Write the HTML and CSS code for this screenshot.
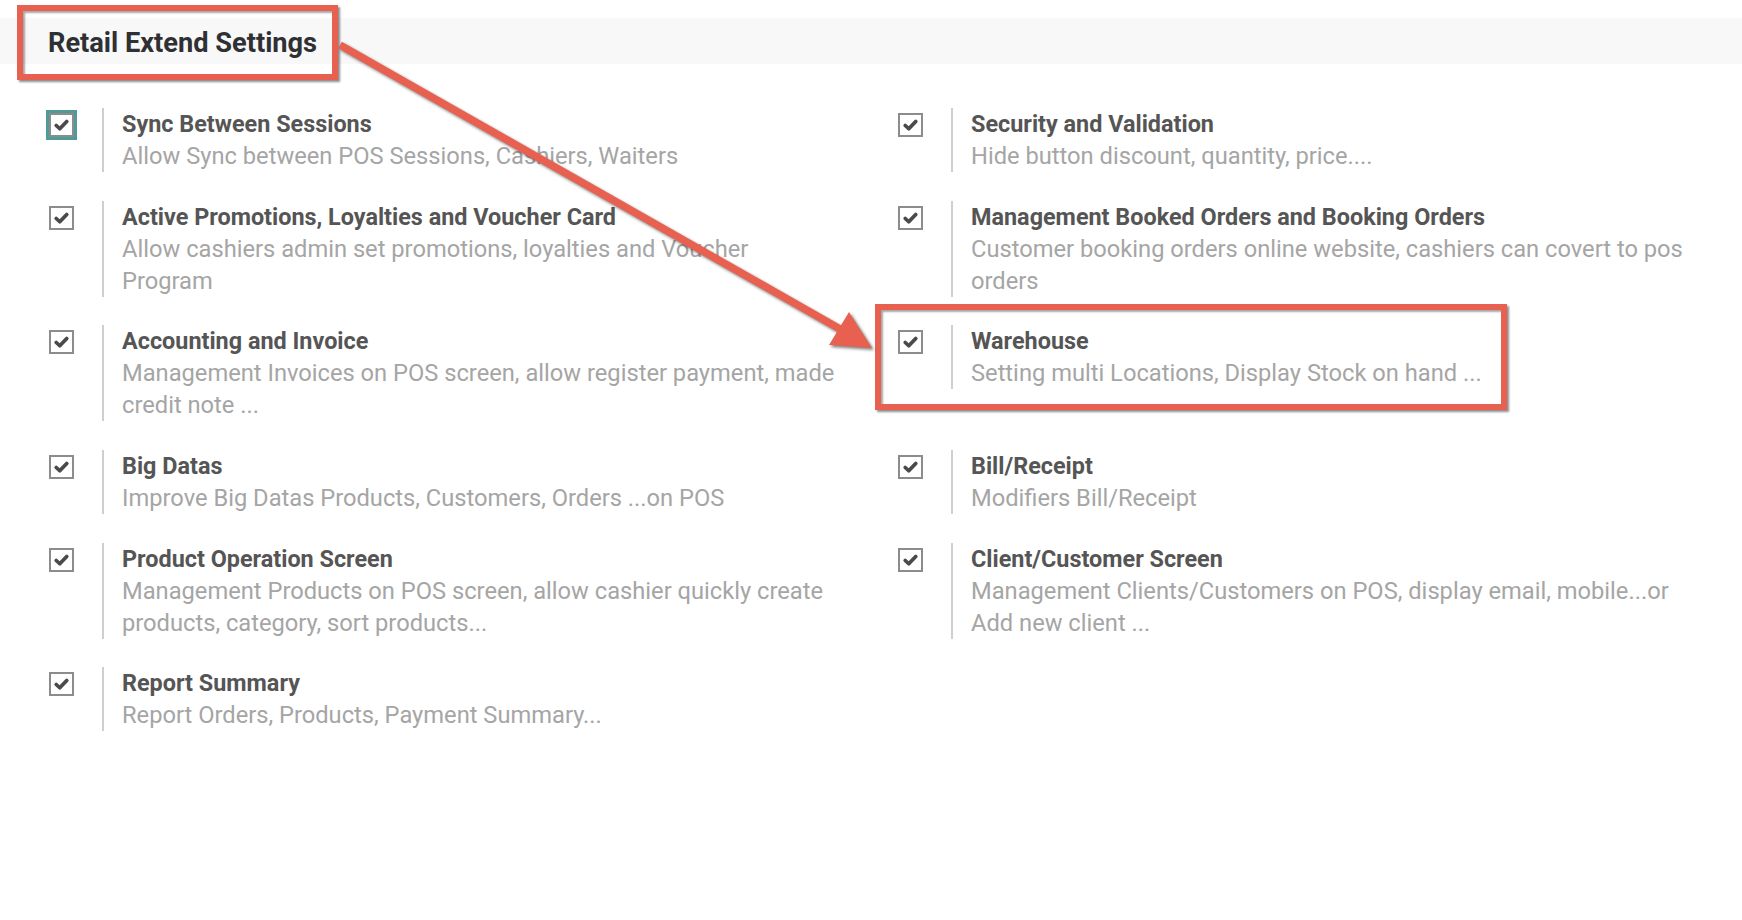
FILE: index.html
```html
<!DOCTYPE html>
<html>
<head>
<meta charset="utf-8">
<link rel="stylesheet" href="styles.css">
</head>
<body>
<div class="page">
  <div class="band"><h1 class="band-title">Retail Extend Settings</h1></div>
  <div class="grid">
    <div class="item">
      <div class="cb-cell"><span class="cb focus"><svg viewBox="0 0 16 16"><path d="M3.8 8.4 L6.6 11 L12.2 5.2" /></svg></span></div>
      <div class="txt"><div class="t">Sync Between Sessions</div><div class="d">Allow Sync between POS Sessions, Cashiers, Waiters</div></div>
    </div>
    <div class="item">
      <div class="cb-cell"><span class="cb"><svg viewBox="0 0 16 16"><path d="M3.8 8.4 L6.6 11 L12.2 5.2" /></svg></span></div>
      <div class="txt"><div class="t">Security and Validation</div><div class="d">Hide button discount, quantity, price....</div></div>
    </div>
    <div class="item">
      <div class="cb-cell"><span class="cb"><svg viewBox="0 0 16 16"><path d="M3.8 8.4 L6.6 11 L12.2 5.2" /></svg></span></div>
      <div class="txt"><div class="t">Active Promotions, Loyalties and Voucher Card</div><div class="d">Allow cashiers admin set promotions, loyalties and Voucher Program</div></div>
    </div>
    <div class="item">
      <div class="cb-cell"><span class="cb"><svg viewBox="0 0 16 16"><path d="M3.8 8.4 L6.6 11 L12.2 5.2" /></svg></span></div>
      <div class="txt"><div class="t">Management Booked Orders and Booking Orders</div><div class="d">Customer booking orders online website, cashiers can covert to pos orders</div></div>
    </div>
    <div class="item">
      <div class="cb-cell"><span class="cb"><svg viewBox="0 0 16 16"><path d="M3.8 8.4 L6.6 11 L12.2 5.2" /></svg></span></div>
      <div class="txt"><div class="t">Accounting and Invoice</div><div class="d">Management Invoices on POS screen, allow register payment, made credit note ...</div></div>
    </div>
    <div class="item">
      <div class="cb-cell"><span class="cb"><svg viewBox="0 0 16 16"><path d="M3.8 8.4 L6.6 11 L12.2 5.2" /></svg></span></div>
      <div class="txt"><div class="t">Warehouse</div><div class="d">Setting multi Locations, Display Stock on hand ...</div></div>
    </div>
    <div class="item">
      <div class="cb-cell"><span class="cb"><svg viewBox="0 0 16 16"><path d="M3.8 8.4 L6.6 11 L12.2 5.2" /></svg></span></div>
      <div class="txt"><div class="t">Big Datas</div><div class="d">Improve Big Datas Products, Customers, Orders ...on POS</div></div>
    </div>
    <div class="item">
      <div class="cb-cell"><span class="cb"><svg viewBox="0 0 16 16"><path d="M3.8 8.4 L6.6 11 L12.2 5.2" /></svg></span></div>
      <div class="txt"><div class="t">Bill/Receipt</div><div class="d">Modifiers Bill/Receipt</div></div>
    </div>
    <div class="item">
      <div class="cb-cell"><span class="cb"><svg viewBox="0 0 16 16"><path d="M3.8 8.4 L6.6 11 L12.2 5.2" /></svg></span></div>
      <div class="txt"><div class="t">Product Operation Screen</div><div class="d">Management Products on POS screen, allow cashier quickly create products, category, sort products...</div></div>
    </div>
    <div class="item">
      <div class="cb-cell"><span class="cb"><svg viewBox="0 0 16 16"><path d="M3.8 8.4 L6.6 11 L12.2 5.2" /></svg></span></div>
      <div class="txt"><div class="t">Client/Customer Screen</div><div class="d">Management Clients/Customers on POS, display email, mobile...or Add new client ...</div></div>
    </div>
    <div class="item">
      <div class="cb-cell"><span class="cb"><svg viewBox="0 0 16 16"><path d="M3.8 8.4 L6.6 11 L12.2 5.2" /></svg></span></div>
      <div class="txt"><div class="t">Report Summary</div><div class="d">Report Orders, Products, Payment Summary...</div></div>
    </div>
  </div>

  <div class="mark mark-title"></div>
  <div class="mark mark-warehouse"></div>
  <svg class="arrow" width="1742" height="920" viewBox="0 0 1742 920">
    <line x1="340" y1="45" x2="840" y2="329" />
    <polygon points="872,348 829,345 849,312" />
  </svg>
</div>
</body>
</html>
```
FILE: styles.css
```css
* { box-sizing: border-box; }
html, body { margin: 0; padding: 0; background: #fff; }
body { font-family: Roboto, "Liberation Sans", sans-serif; }
.page { position: relative; width: 1742px; height: 920px; overflow: hidden; padding-top: 18px; }
.band { height: 46px; background: #f8f8f8; display: flex; align-items: center; padding: 3px 0 0 48px; }
.band-title { margin: 0; font-size: 27.2px; font-weight: 700; color: #2f3033; }
.grid { margin-top: 44px; padding-left: 49px; display: grid; grid-template-columns: 849px 1fr; row-gap: 28.7px; }
.item { display: flex; align-items: flex-start; }
.cb-cell { width: 53px; flex: none; padding-top: 5px; }
.cb { display: block; width: 25px; height: 24px; border: 2px solid #8c8c8c; background: #fff; }
.cb.focus { box-shadow: 0 0 0 3px #4f9b97; }
.cb svg { display: block; width: 21px; height: 20px; fill: none; stroke: #4a4a4a; stroke-width: 3; stroke-linecap: round; stroke-linejoin: round; }
.txt { border-left: 2px solid #cfcfcf; padding-left: 18px; max-width: 735px; font-size: 23.7px; line-height: 32px; }
.t { font-weight: 700; color: #555; font-size: 23.4px; }
.d { color: #a5a5a5; }
.mark { position: absolute; border: 6px solid #e8604f; box-shadow: 2px 2px 2px rgba(0,0,0,.45), inset 2px 2px 2px rgba(0,0,0,.35); }
.mark-title { left: 17px; top: 5px; width: 321px; height: 75px; }
.mark-warehouse { left: 875px; top: 304px; width: 632px; height: 106px; }
.arrow { position: absolute; left: 0; top: 0; filter: drop-shadow(2px 2px 1.5px rgba(0,0,0,.5)); }
.arrow line { stroke: #e8604f; stroke-width: 7.5; }
.arrow polygon { fill: #e8604f; }
```
